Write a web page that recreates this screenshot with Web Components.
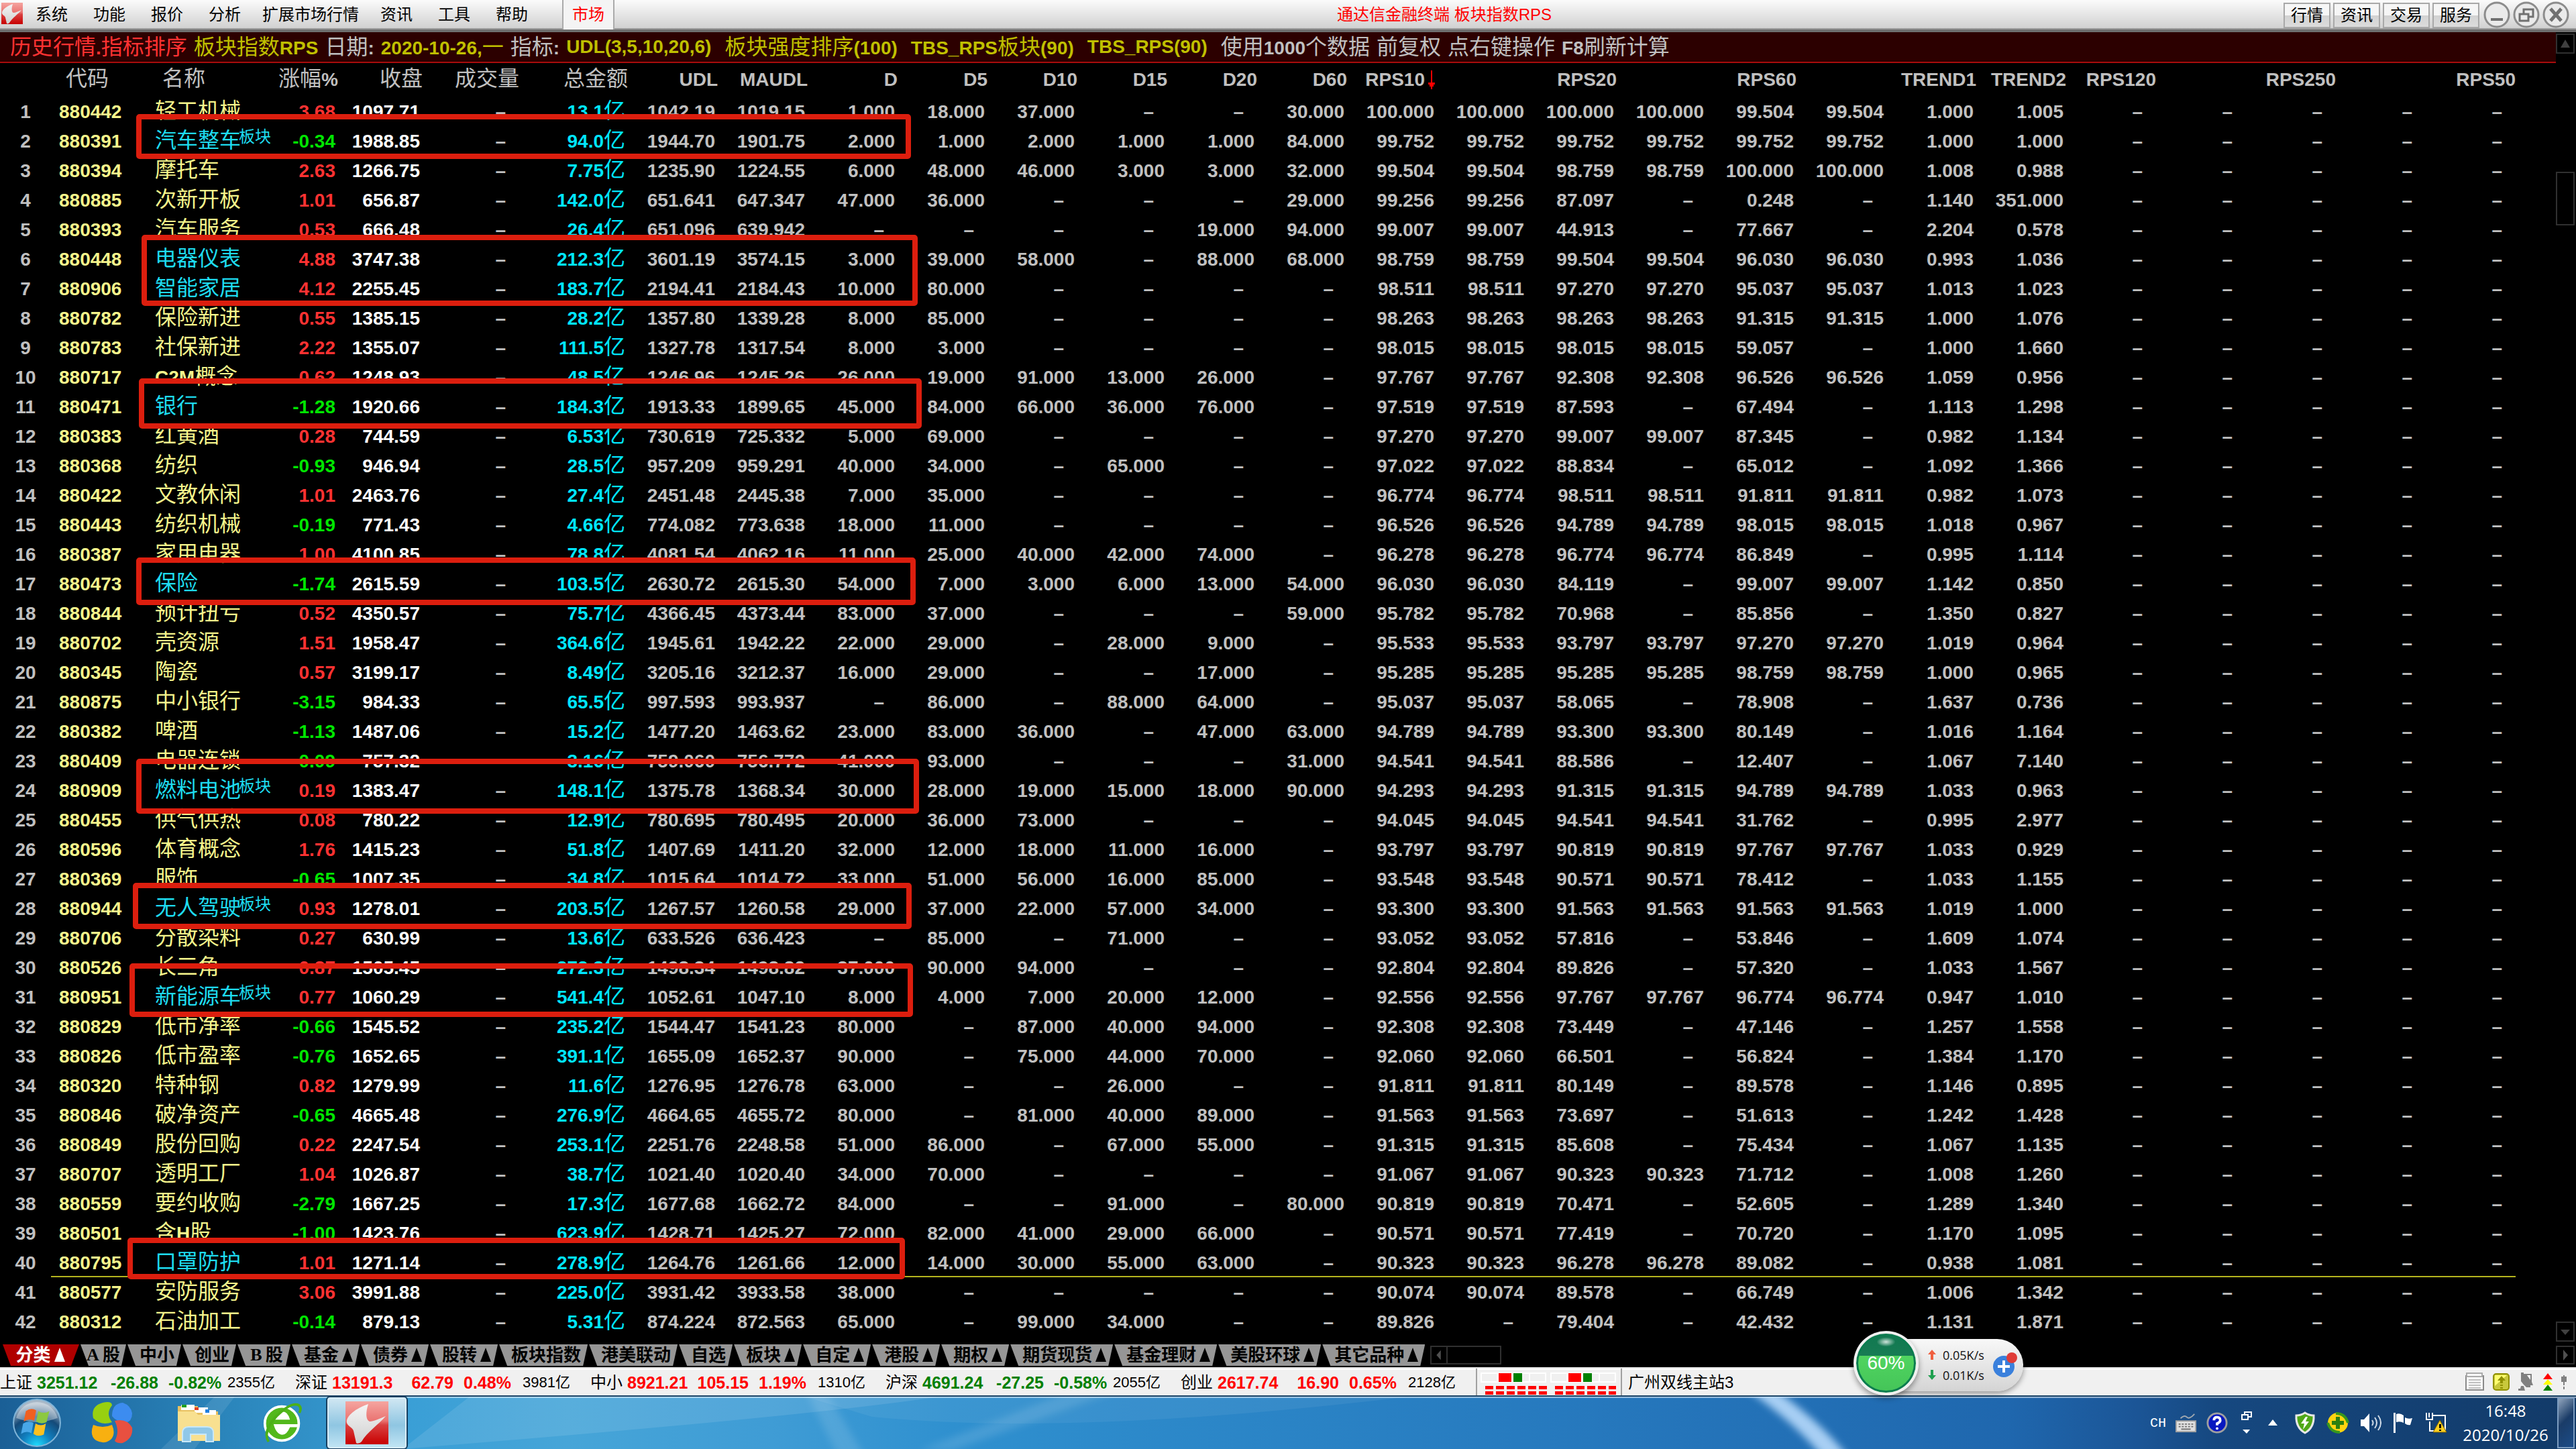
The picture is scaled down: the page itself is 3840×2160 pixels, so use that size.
<!DOCTYPE html>
<html lang="zh-CN">
<head>
<meta charset="utf-8">
<title>通达信金融终端</title>
<style>
html,body{margin:0;height:100%;background:#000;overflow:hidden}
body{font-family:"Liberation Sans","Noto Sans CJK SC",sans-serif}
</style>
</head>
<body>
<trade-terminal></trade-terminal>
<script>
const RESET = `
*{box-sizing:border-box}
button{font:inherit;color:inherit;background:none;border:0;padding:0;margin:0;line-height:inherit;white-space:nowrap}
svg{display:block;flex:none}
`;
const define = (name, html, css) => {
  const t = document.createElement('template');
  t.innerHTML = `<style>${RESET}${css}</style>${html}`;
  customElements.define(name, class extends HTMLElement {
    constructor() {
      super();
      this.attachShadow({ mode: 'open' }).append(t.content.cloneNode(true));
    }
  });
};
// Latin and digits are bold, Chinese runs stay at regular weight
const mix = s => s.replace(/[\u4e00-\u9fff]+/g, m => `<span class="k">${m}</span>`);
const logo = `<svg viewBox="0 0 32 32" preserveAspectRatio="none" width="100%" height="100%"><defs><linearGradient id="r" x1="0" y1="0" x2="0" y2="1"><stop offset="0" stop-color="#f5a5a0"/><stop offset=".45" stop-color="#ea7472"/><stop offset=".55" stop-color="#d94040"/><stop offset="1" stop-color="#c80000"/></linearGradient><linearGradient id="w" x1="0" y1="0" x2="0" y2="1"><stop offset="0" stop-color="#f5f5f5"/><stop offset="1" stop-color="#d0d0d0"/></linearGradient></defs><path fill="url(#r)" d="M0 0h32v32H0z"/><path fill="url(#w)" d="M17 2C8 5 0 11 1 16c1 3 4 3 5 6l2 9c1 1 3 0 4-1 4-7 13-13 18-19-5 2-9 4-12 4-3-1-3-7-1-13z"/></svg>`;

/* ---------- menu bar ---------- */
define('menu-bar', `
<i class="logo">${logo}</i>
<nav>${['系统','功能','报价','分析','扩展市场行情','资讯','工具','帮助'].map(m => `<button>${m}</button>`).join('')}</nav>
<button class="market">市场</button>
<h1>通达信金融终端 板块指数RPS</h1>
<div class="quick">${['行情','资讯','交易','服务'].map(m => `<button>${m}</button>`).join('')}</div>
<div class="win">
<button aria-label="最小化"><svg viewBox="0 0 40 40"><circle cx="20" cy="20" r="18"/><path d="M11 27h18" stroke-width="4"/></svg></button>
<button aria-label="还原"><svg viewBox="0 0 40 40"><circle cx="20" cy="20" r="18"/><path d="M16 18v-6h14v11h-6M10 19h13v10H10z" stroke-width="3"/></svg></button>
<button aria-label="关闭"><svg viewBox="0 0 40 40"><circle cx="20" cy="20" r="18" stroke="#aaa"/><path d="M12 11l16 18M28 11L12 29" stroke-width="5"/></svg></button>
</div>`, `
:host{display:flex;height:48px;flex:none;background:linear-gradient(#fbfbfb,#d0d0d0 43px);border-bottom:4px solid #6e6e6e;box-shadow:inset 0 -2px #9a9a9a;font-size:24px;line-height:44px;color:#000}
.logo{width:32px;height:32px;margin:4px 0 0 2px}
nav{display:flex}
nav button{min-width:86px;padding:0 13px}
.market{width:78px;margin-left:32px;color:#f00;background:#f4f4f4;border-left:2px solid #aaa;border-right:2px solid #aaa}
h1{flex:1;margin:0;padding-right:14px;font:inherit;color:#f00;text-align:center;white-space:nowrap}
.quick{display:flex;gap:4px;padding:4px 6px 0 0;line-height:34px}
.quick button{width:70px;height:38px;border:2px solid #a8a8a8;background:linear-gradient(#f6f6f6 50%,#d2d2d2 50%,#dcdcdc)}
.win{display:flex;gap:4px;padding:2px 10px 0 0}
.win button{width:40px;height:40px}
.win svg{fill:none;stroke:#707070;stroke-width:3}
.win circle{fill:#eaeaea;stroke:#8c8c8c}
`);

/* ---------- indicator strip ---------- */
define('info-strip', `
<span class="r">${mix('历史行情.指标排序')}</span>
<span class="y">${mix('板块指数RPS')}</span>
<span>${mix('日期:')}</span>
<span class="y">${mix('2020-10-26,一')}</span>
<span>${mix('指标:')}</span>
<span class="y g">${mix('UDL(3,5,10,20,6)')}</span>
<span class="y g">${mix('板块强度排序(100)')}</span>
<span class="y g">${mix('TBS_RPS板块(90)')}</span>
<span class="y g">TBS_RPS(90)</span>
<span>${mix('使用1000个数据')}</span>
<span>${mix('前复权')}</span>
<span>${mix('点右键操作')}</span>
<span>${mix('F8刷新计算')}</span>`, `
:host{display:flex;flex:none;gap:10px;height:46px;padding-left:15px;background:#2c0000;border-bottom:2px solid #a80c0c;font-size:28px;line-height:44px;font-weight:700;color:#c0c0c0;white-space:nowrap}
.k{font-size:32px;font-weight:400}
.r{color:#ff3232}.y{color:#c0c000}
.g{padding-right:10px}
`);

/* ---------- quote table ---------- */
const HEAD = ['','代码','名称','涨幅%','收盘','成交量','总金额','UDL','MAUDL','D','D5','D10','D15','D20','D60','RPS10','','RPS20','','RPS60','','TREND1','TREND2','RPS120','','RPS250','','RPS50'];
const DATA = `
880442 轻工机械 3.68 1097.71 13.1亿 1042.19 1019.15 1 18 37 - - 30 100.000 100.000 100.000 100.000 99.504 99.504 1.000 1.005
880391 *汽车整车^ -0.34 1988.85 94.0亿 1944.70 1901.75 2 1 2 1 1 84 99.752 99.752 99.752 99.752 99.752 99.752 1.000 1.000
880394 摩托车 2.63 1266.75 7.75亿 1235.90 1224.55 6 48 46 3 3 32 99.504 99.504 98.759 98.759 100.000 100.000 1.008 0.988
880885 次新开板 1.01 656.87 142.0亿 651.641 647.347 47 36 - - - 29 99.256 99.256 87.097 - 0.248 - 1.140 351.000
880393 汽车服务 0.53 666.48 26.4亿 651.096 639.942 - - - - 19 94 99.007 99.007 44.913 - 77.667 - 2.204 0.578
880448 *电器仪表 4.88 3747.38 212.3亿 3601.19 3574.15 3 39 58 - 88 68 98.759 98.759 99.504 99.504 96.030 96.030 0.993 1.036
880906 *智能家居 4.12 2255.45 183.7亿 2194.41 2184.43 10 80 - - - - 98.511 98.511 97.270 97.270 95.037 95.037 1.013 1.023
880782 保险新进 0.55 1385.15 28.2亿 1357.80 1339.28 8 85 - - - - 98.263 98.263 98.263 98.263 91.315 91.315 1.000 1.076
880783 社保新进 2.22 1355.07 111.5亿 1327.78 1317.54 8 3 - - - - 98.015 98.015 98.015 98.015 59.057 - 1.000 1.660
880717 C2M概念 0.62 1248.93 48.5亿 1246.96 1245.26 26 19 91 13 26 - 97.767 97.767 92.308 92.308 96.526 96.526 1.059 0.956
880471 *银行 -1.28 1920.66 184.3亿 1913.33 1899.65 45 84 66 36 76 - 97.519 97.519 87.593 - 67.494 - 1.113 1.298
880383 红黄酒 0.28 744.59 6.53亿 730.619 725.332 5 69 - - - - 97.270 97.270 99.007 99.007 87.345 - 0.982 1.134
880368 纺织 -0.93 946.94 28.5亿 957.209 959.291 40 34 - 65 - - 97.022 97.022 88.834 - 65.012 - 1.092 1.366
880422 文教休闲 1.01 2463.76 27.4亿 2451.48 2445.38 7 35 - - - - 96.774 96.774 98.511 98.511 91.811 91.811 0.982 1.073
880443 纺织机械 -0.19 771.43 4.66亿 774.082 773.638 18 11 - - - - 96.526 96.526 94.789 94.789 98.015 98.015 1.018 0.967
880387 家用电器 1.00 4100.85 78.8亿 4081.54 4062.16 11 25 40 42 74 - 96.278 96.278 96.774 96.774 86.849 - 0.995 1.114
880473 *保险 -1.74 2615.59 103.5亿 2630.72 2615.30 54 7 3 6 13 54 96.030 96.030 84.119 - 99.007 99.007 1.142 0.850
880844 预计扭亏 0.52 4350.57 75.7亿 4366.45 4373.44 83 37 - - - 59 95.782 95.782 70.968 - 85.856 - 1.350 0.827
880702 壳资源 1.51 1958.47 364.6亿 1945.61 1942.22 22 29 - 28 9 - 95.533 95.533 93.797 93.797 97.270 97.270 1.019 0.964
880345 陶瓷 0.57 3199.17 8.49亿 3205.16 3212.37 16 29 - - 17 - 95.285 95.285 95.285 95.285 98.759 98.759 1.000 0.965
880875 中小银行 -3.15 984.33 65.5亿 997.593 993.937 - 86 - 88 64 - 95.037 95.037 58.065 - 78.908 - 1.637 0.736
880382 啤酒 -1.13 1487.06 15.2亿 1477.20 1463.62 23 83 36 - 47 63 94.789 94.789 93.300 93.300 80.149 - 1.016 1.164
880409 电器连锁 -0.09 757.32 3.16亿 759.060 756.772 41 93 - - - 31 94.541 94.541 88.586 - 12.407 - 1.067 7.140
880909 *燃料电池^ 0.19 1383.47 148.1亿 1375.78 1368.34 30 28 19 15 18 90 94.293 94.293 91.315 91.315 94.789 94.789 1.033 0.963
880455 供气供热 0.08 780.22 12.9亿 780.695 780.495 20 36 73 - - - 94.045 94.045 94.541 94.541 31.762 - 0.995 2.977
880596 体育概念 1.76 1415.23 51.8亿 1407.69 1411.20 32 12 18 11 16 - 93.797 93.797 90.819 90.819 97.767 97.767 1.033 0.929
880369 服饰 -0.65 1007.35 34.8亿 1015.64 1014.72 33 51 56 16 85 - 93.548 93.548 90.571 90.571 78.412 - 1.033 1.155
880944 *无人驾驶^ 0.93 1278.01 203.5亿 1267.57 1260.58 29 37 22 57 34 - 93.300 93.300 91.563 91.563 91.563 91.563 1.019 1.000
880706 分散染料 0.27 630.99 13.6亿 633.526 636.423 - 85 - 71 - - 93.052 93.052 57.816 - 53.846 - 1.609 1.074
880526 长三角 0.87 1505.45 272.3亿 1498.34 1498.82 37 90 94 - - - 92.804 92.804 89.826 - 57.320 - 1.033 1.567
880951 *新能源车^ 0.77 1060.29 541.4亿 1052.61 1047.10 8 4 7 20 12 - 92.556 92.556 97.767 97.767 96.774 96.774 0.947 1.010
880829 低市净率 -0.66 1545.52 235.2亿 1544.47 1541.23 80 - 87 40 94 - 92.308 92.308 73.449 - 47.146 - 1.257 1.558
880826 低市盈率 -0.76 1652.65 391.1亿 1655.09 1652.37 90 - 75 44 70 - 92.060 92.060 66.501 - 56.824 - 1.384 1.170
880320 特种钢 0.82 1279.99 11.6亿 1276.95 1276.78 63 - - 26 - - 91.811 91.811 80.149 - 89.578 - 1.146 0.895
880846 破净资产 -0.65 4665.48 276.9亿 4664.65 4655.72 80 - 81 40 89 - 91.563 91.563 73.697 - 51.613 - 1.242 1.428
880849 股份回购 0.22 2247.54 253.1亿 2251.76 2248.58 51 86 - 67 55 - 91.315 91.315 85.608 - 75.434 - 1.067 1.135
880707 透明工厂 1.04 1026.87 38.7亿 1021.40 1020.40 34 70 - - - - 91.067 91.067 90.323 90.323 71.712 - 1.008 1.260
880559 要约收购 -2.79 1667.25 17.3亿 1677.68 1662.72 84 - - 91 - 80 90.819 90.819 70.471 - 52.605 - 1.289 1.340
880501 含H股 -1.00 1423.76 623.9亿 1428.71 1425.27 72 82 41 29 66 - 90.571 90.571 77.419 - 70.720 - 1.170 1.095
880795 *口罩防护 1.01 1271.14 278.9亿 1264.76 1261.66 12 14 30 55 63 - 90.323 90.323 96.278 96.278 89.082 - 0.938 1.081
880577 安防服务 3.06 3991.88 225.0亿 3931.42 3933.58 38 - - - - - 90.074 90.074 89.578 - 66.749 - 1.006 1.342
880312 石油加工 -0.14 879.13 5.31亿 874.224 872.563 65 - 99 34 - - 89.826 - 79.404 - 42.432 - 1.131 1.871`.trim().split('\n').map(l => l.split(' '));
const num = v => v === '-' ? '<td class="n">–</td>' : `<td>${v}</td>`;
const row = (r, i) => {
  const [code, name, pct, close, amt, udl, mau, ...rest] = r;
  const hot = name[0] === '*';
  const label = mix(name.replace(/[*^]/g, '')) + (name.endsWith('^') ? '<span class="sup">板块</span>' : '');
  const days = rest.slice(0, 6).map(v => num(v === '-' ? v : v + '.000')).join('');
  return `<tr${i === 39 ? ' class="cur"' : ''}><td class="i">${i + 1}</td><td class="c">${code}</td><td class="m${hot ? ' hot' : ''}">${label}</td><td class="${pct[0] === '-' ? 'dn' : 'up'}">${pct}</td><td class="w">${close}</td><td class="n">–</td><td class="a">${mix(amt)}</td>${num(udl)}${num(mau)}${days}${rest.slice(6).map(num).join('')}${'<td class="n">–</td>'.repeat(5)}</tr>`;
};
const WIDTHS = [76, 134, 200, 94, 126, 144, 162].concat(Array(21).fill(134));
const arrow = '<svg width="16" height="28" viewBox="0 0 16 28"><path fill="red" d="M7 0h2v18h4v3h-2v3H9v4H7v-4H5v-3H3v-3h4z"/></svg>';
// top, height, left and width of each highlight frame drawn over the rows
const MARKS = [[170,67,203,1155],[350,106,211,1157],[564,75,207,1167],[831,71,203,1162],[1131,82,203,1167],[1316,69,198,1161],[1436,80,193,1168],[1845,62,190,1159]];
define('quote-table', `
<table>
<colgroup>${WIDTHS.map(w => `<col style="width:${w}px">`).join('')}</colgroup>
<thead><tr>${HEAD.map((h, i) => `<th${i === 1 ? ' class="hc"' : i === 2 ? ' class="hn"' : ''}>${i === 15 ? `<span class="sort">${h}${arrow}</span>` : mix(h)}</th>`).join('')}</tr></thead>
<tbody>${DATA.map(row).join('')}</tbody>
</table>
${MARKS.map(([t, h, l, w]) => `<i class="mark" style="top:${t - 94}px;left:${l}px;width:${w}px;height:${h}px"></i>`).join('')}`, `
:host{display:block;position:relative;flex:1;min-height:0;overflow:hidden;color:#c0c0c0;font-size:28px;font-weight:700}
table{table-layout:fixed;border-collapse:collapse;width:3750px;white-space:nowrap}
th,td{padding:0;text-align:right;overflow:visible}
th{height:50px;line-height:50px}
td{height:44px;padding:2px 4px 0 0;line-height:42px}
.k{font-size:32px;font-weight:400;line-height:1px}
th.hc{text-align:left;padding-left:22px}
th.hn{text-align:left;padding-left:32px}
.sort{display:inline-flex;align-items:center;gap:2px;vertical-align:top}
.i{text-align:center;padding-right:0}
.c{text-align:left;padding-left:12px;color:#f5f58c}
.m{text-align:left;padding-left:21px;color:#f5f58c}
.m.hot{color:#1edcf0}
.sup{font-size:24px;font-weight:400;line-height:1px;vertical-align:8px;margin-left:-3px}
.up{color:#ff3232}.dn{color:#00e600}.w{color:#fff}.a{color:#00e6ff}
td.n{padding-right:20px;color:#c0c0c0}
.cur td:not(.i){box-shadow:inset 0 -2px #b4b41e}
.mark{position:absolute;border:8px solid #dc1e0e;border-radius:5px}
`);

/* ---------- scroll bar ---------- */
define('scroll-rail', `
<button aria-label="上"><svg width="28" height="30" viewBox="0 0 28 30"><path d="M14 9l7 12H7z"/></svg></button>
<i></i>
<button aria-label="下"><svg width="28" height="30" viewBox="0 0 28 30"><path d="M14 20l7-8H7z"/></svg></button>`, `
:host{display:flex;flex-direction:column;flex:none;width:30px;padding:2px 2px 4px 0;align-items:stretch}
button{height:30px;border:2px solid #303030}
svg{margin:-2px;fill:#404040}
i{height:80px;margin:176px 0 auto;border:2px solid #303030}
`);

/* ---------- board tabs ---------- */
const TABS = ['分类▲','A 股','中小','创业','B 股','基金▲','债券▲','股转▲','板块指数','港美联动','自选','板块▲','自定▲','港股▲','期权▲','期货现货▲','基金理财▲','美股环球▲','其它品种▲'];
const up = '<svg width="16" height="22" viewBox="0 0 16 22"><path fill="currentColor" d="M8 0l8 21H0z"/></svg>';
define('board-tabs', `
${TABS.map((t, i) => `<button${i === 0 ? ' class="on"' : i === 1 ? ' class="a"' : ''}>${t.replace('▲', '').replace(/^([AB]) /, '<b>$1</b>')}${t.endsWith('▲') ? up : ''}</button>`).join('')}
<span class="track"><svg width="24" height="24" viewBox="0 0 24 24"><path fill="#505050" d="M15 4v16l-7-8z"/></svg></span>
<span class="end"><svg width="24" height="24" viewBox="0 0 24 24"><path fill="#505050" d="M9 4v16l7-8z"/></svg></span>`, `
:host{display:flex;flex:none;height:34px;padding-left:4px;gap:2px;background:#000;font-size:26px;font-weight:700;line-height:32px}
button{display:flex;flex:none;align-items:center;justify-content:center;gap:5px;height:32px;min-width:79px;padding:0 10px 0 18px;background:#969696;color:#000;clip-path:polygon(0 0,100% 0,calc(100% - 7px) 100%,12px 100%)}
.on{background:#b00000;color:#fff;width:114px;padding:0 20px 0 18px;clip-path:polygon(0 0,100% 0,calc(100% - 12px) 100%,12px 100%)}
.a{min-width:68px;padding:0 8px}
b{font-family:"Liberation Serif",serif}
.track{width:106px;height:28px;margin:2px auto 0 6px;border:2px solid #303030}
.track svg{border-right:2px solid #303030}
.end{width:28px;height:28px;margin:2px 2px 0 0;border:2px solid #303030}
`);

/* ---------- index ticker ---------- */
const IDX = [['上证','3251.12','-26.88','-0.82%','2355亿'],['深证','13191.3','62.79','0.48%','3981亿'],['中小','8921.21','105.15','1.19%','1310亿'],['沪深','4691.24','-27.25','-0.58%','2055亿'],['创业','2617.74','16.90','0.65%','2128亿']];
const meter = x => {
  let s = `<path fill="#fff" d="M${x} 0h98v15H${x}z"/><path fill="#f0f0f0" d="M${x + 2} 2h22v11h-22zM${x + 52} 2h20v11h-20zM${x + 74} 2h22v11h-22z"/><path fill="#f00" d="M${x + 27} 1h19v13h-19z"/><path fill="#008000" d="M${x + 49} 1h13v13h-13z"/><path fill="#f00" d="`;
  for (let r = 0; r < 2; r++) for (let c = 0; c < 6; c++) s += `M${x + 7 + c * 16} ${20 + r * 8}h12v5h-12z`;
  return s + '"/>';
};
define('index-ticker', `
${IDX.map(([n, p, c, q, v]) => `<div class="q ${c[0] === '-' ? 'g' : 'r'}"><span>${n}</span><b>${p}</b><b class="e">${c}</b><b class="p">${q}</b><span class="v">${v}</span></div>`).join('')}
<div class="meters"><svg width="202" height="34" viewBox="0 0 202 34">${meter(0)}${meter(104)}</svg></div>
<span class="host">广州双线主站3</span>
<div class="icons">
<svg width="30" height="28" viewBox="0 0 30 28"><path fill="#f8f8f8" stroke="#8a8a8a" stroke-width="2" d="M2 5h26v21H2z"/><path fill="#f8f8f8" stroke="#aaa" stroke-width="2" d="M3 1h23v5H3z"/><path stroke="#c0c0c0" stroke-width="2" d="M6 11h18M6 15h18M6 19h18M6 23h18"/></svg>
<svg width="26" height="28" viewBox="0 0 26 28"><rect x="1" y="2" width="23" height="24" rx="4" fill="#c8c83c" stroke="#909000" stroke-width="2"/><path fill="#ffff70" d="M3 4h18L3 20z"/><path fill="#909000" d="M13 5l6 7h-4v4h-4v-4H7zM11 18h4v2h-4zM11 22h4v2h-4z"/></svg>
<svg width="24" height="28" viewBox="0 0 24 28"><path fill="#808080" d="M4 0h4v2h12v12l2 5h-4v3h-6L8 18l-4-5zM4 20h4l2 7H0v-3h3z"/><path fill="#fff" d="M13 4h5v7z"/></svg>
<svg width="16" height="28" viewBox="0 0 16 28"><path fill="red" d="M8 1l7 9H1z"/><path fill="#ff0" d="M8 10l7 8H1z"/><path fill="green" d="M8 18l7 9H1z"/></svg>
<svg width="8" height="28" viewBox="0 0 8 28"><path fill="#808080" d="M3 4h2v2h3v8H5v5H3v-5H0V6h3zM3 21h2v4H3z"/></svg>
</div>`, `
:host{display:flex;flex:none;height:42px;background:#f0f0f0;border-top:2px solid #e3e3e3;box-shadow:inset 0 2px #fff;font-size:24px;line-height:42px;color:#000;white-space:nowrap}
.q{display:grid;grid-template-columns:55px 92px 89px 103px 101px}
.q b{font-size:25px}
.e{text-align:right}
.p{padding-left:15px}
.v{font-size:22px}
.g b{color:#008000}.r b{color:#f00}
.meters{border-left:2px solid #a0a0a0;border-right:2px solid #a0a0a0;padding:6px 5px 0 5px;margin-right:9px;width:218px}
.icons{display:flex;gap:12px;margin-left:auto;padding:6px 14px 0 0}
`);

/* ---------- task bar ---------- */
define('task-bar', `
<svg class="bg" preserveAspectRatio="none" viewBox="0 0 3840 78"><defs><filter id="f" x="-20%" y="-20%" width="140%" height="140%"><feGaussianBlur stdDeviation="6"/></filter></defs>
<path fill="#fff" opacity=".1" d="M600 78L700 0h700q-200 30-800 78zM240 78L320 0h30l-60 78z"/>
<path fill="#fff" opacity=".12" filter="url(#f)" d="M1200 -10h30l60 100h-40zM1370 80l230-90h70l-250 90z"/>
<path fill="#fff" opacity=".06" d="M1300 30q300 30 800-30h-900z"/>
<path fill="#bfe0ff" opacity=".85" filter="url(#f)" d="M2605 -10h42q70 50 108 100h-38q-40-50-112-100z"/></svg>
<div class="apps">
<button aria-label="开始"><svg width="76" height="76" viewBox="0 0 74 74"><defs><radialGradient id="o" cx=".5" cy="1" r=".9"><stop offset="0" stop-color="#20e0ff"/><stop offset=".35" stop-color="#1080c0"/><stop offset=".7" stop-color="#154a78"/><stop offset="1" stop-color="#a8b8c8"/></radialGradient></defs><circle cx="37" cy="37" r="34" fill="url(#o)" stroke="#7fb4d8" stroke-width="2"/><path fill="#fff" opacity=".35" d="M7 30a31 31 0 0160 0q-30 12-60 0z"/><path fill="#f06020" d="M21 20q8-6 15-1l-3 15q-7-4-15 1z"/><path fill="#8cc840" d="M39 20q8 5 16 0l-4 16q-8 4-15-1z"/><path fill="#48a8e8" d="M17 38q8-5 15-1l-3 15q-7-4-15 1z"/><path fill="#fcc020" d="M35 38q8 5 15 0l-3 16q-8 4-15-1z"/></svg></button>
<button aria-label="应用"><svg width="64" height="62" viewBox="0 0 64 62"><path fill="#98d010" d="M18 1q14-3 14 4-10 12 0 25-16 6-28-6Q0 6 18 1z"/><path fill="#3c8cf0" d="M48 1q12 4 14 16 0 12-10 14-14-2-20-10Q32 2 48 1z"/><path fill="#f8b010" d="M4 34q14 6 28 0 6 14-2 22-10 8-22 1Q-2 50 4 34z"/><path fill="#e85040" d="M36 28q18-4 26 10 2 16-14 23-8 1-12-3 8-14 0-30z"/></svg></button>
<button aria-label="资源管理器"><svg width="66" height="58" viewBox="0 0 66 58"><path fill="#e8c060" d="M1 4h30v8h30v44H1z"/><path fill="#fff" d="M6 2h20v8H6zM26 6h20v8H26zM38 10h20v8H38z"/><path fill="#20a020" d="M7 2h7v4H7z"/><path fill="#e04020" d="M26 6h6v4h-6z"/><path fill="#2080e0" d="M42 9h6v5h-6z"/><path fill="#f8e090" d="M1 12h26l4 5h33v39H1z"/><path fill="#90c8e8" stroke="#c8e8f8" stroke-width="2" d="M8 57V44q0-9 9-9h28q9 0 9 9v13H43V46H20v11z"/></svg></button>
<button aria-label="浏览器"><svg width="60" height="62" viewBox="0 0 64 64"><circle cx="31" cy="33" r="27" fill="#52b81c" stroke="#fff" stroke-width="4"/><path fill="#fff" d="M20 27q3-13 12-13t12 13z"/><path fill="#fff" d="M18 34h40v5H44q-5 12-12 12-10-1-14-17z"/><path fill="none" stroke="#4cb018" stroke-width="4" d="M10 62Q0 46 22 22 46-2 58 4q5 4 1 12"/></svg></button>
<button class="active" aria-label="通达信"><i>${logo}</i></button>
</div>
<div class="lang">
<span class="ch">CH</span>
<svg width="32" height="32" viewBox="0 0 34 32"><path fill="none" stroke="#a0a8b0" stroke-width="2" d="M8 9q6-6 10-2t12-5"/><rect x="1" y="13" width="31" height="17" fill="#e0e0e0" stroke="#a0a0a0" stroke-width="2"/><path stroke="#707070" stroke-width="2" stroke-dasharray="3 2" d="M5 18h24M5 22h24"/><path stroke="#707070" stroke-width="2" d="M9 26h15"/></svg>
<svg width="32" height="32" viewBox="0 0 34 34"><circle cx="17" cy="17" r="15" fill="#0818c0" stroke="#a0a0a0" stroke-width="3"/><path fill="none" stroke="#fff" stroke-width="4" d="M12 13q0-5 5-5t5 5q0 3-5 5v3"/><circle cx="17" cy="26" r="2" fill="#fff"/></svg>
</div>
<div class="sys">
<svg width="18" height="36" viewBox="0 0 18 36"><path fill="none" stroke="#fff" stroke-width="2" d="M6 6V2h10v7h-4M2 6h9v7H2z"/><path fill="#fff" d="M3 28h11l-5 6z"/></svg>
<svg width="16" height="12" viewBox="0 0 16 12"><path fill="#fff" d="M8 1l7 9H1z"/></svg>
</div>
<div class="tray">
<svg width="32" height="34" viewBox="0 0 32 34"><path fill="#50a818" stroke="#e8e8e8" stroke-width="3" d="M16 2q6 4 13 4 1 18-13 26Q2 24 3 6q7 0 13-4z"/><path fill="#fff" d="M17 8l-7 10h5l-2 9 9-12h-5l3-7z"/></svg>
<svg width="34" height="34" viewBox="0 0 34 34"><circle cx="17" cy="17" r="15" fill="#ffd410"/><path fill="none" stroke="#38981c" stroke-width="4" d="M14 3q14 0 18 14M20 31Q6 31 2 17"/><path fill="#2c8010" d="M14 8h6v6h6v6h-6v6h-6v-6H8v-6h6z"/></svg>
<svg width="32" height="30" viewBox="0 0 32 30"><path fill="#fff" d="M1 10h5l8-9v28l-8-9H1z"/><path fill="none" stroke="#d0dce8" stroke-width="2" d="M18 11q3 4 0 8M22 7q6 8 0 16M27 4q8 11 0 22"/></svg>
<svg width="32" height="32" viewBox="0 0 32 32"><path fill="#fff" d="M2 1h3v30H2zM6 3q6-2 11 2v11q-5-3-11-1zM19 8q5 3 11 1l-3 10q-4 1-8-2z"/></svg>
<svg width="34" height="32" viewBox="0 0 34 32"><path fill="none" stroke="#fff" stroke-width="2" d="M12 5h19v22M8 14v14h10"/><path fill="none" stroke="#fff" stroke-width="2" d="M3 1v10h9V1M7 1v7"/><path fill="#fcd020" stroke="#806000" d="M23 12l10 18H13z"/><path fill="#000" d="M22 18h3v6h-3zM22 26h3v2h-3z"/></svg>
</div>
<time><span>16:48</span><span>2020/10/26</span></time>
<button class="desk" aria-label="显示桌面"></button>`, `
:host{display:flex;position:relative;flex:none;height:80px;border-top:2px solid #1e4668;align-items:center;color:#fff;
background:linear-gradient(90deg,#1a5f96,#2b86bc 9%,#3a9fd6 16%,#46a5d8 22%,#3f9cd5 30%,#2f90cf 37%,#2678bd 62%,#1f67ae 78%,#1b5596 83%,#164880 86%,#123a68)}
.bg{position:absolute;inset:0;width:100%;height:100%;box-shadow:inset 0 2px rgba(255,255,255,.5)}
button,div,time{position:relative}
.apps{display:grid;grid-template-columns:110px 114px 146px 102px 16px 118px;grid-auto-rows:76px}
.apps button{display:flex;align-items:center;justify-content:center}
.apps .active{grid-column:6;border:2px solid #d8ecf8;border-radius:4px;outline:2px solid #184060;background:linear-gradient(#cfe6f2,#8fc6e2 55%,#c0e4f4)}
.active i{width:64px;height:64px}
.lang,.sys,.tray{display:flex;align-items:center}
.lang{gap:14px;margin-left:auto}
.sys{gap:22px;margin:0 24px 0 19px}
.tray{gap:16px}
.ch{font:20px "Liberation Mono",monospace}
time{display:flex;flex-direction:column;align-items:center;font-family:"Open Sans",sans-serif;font-size:24px;line-height:36px;width:134px;margin:0 10px 0 20px}
.desk{width:26px;height:76px;margin-right:2px;border:2px solid #7c9cc0;background:linear-gradient(135deg,#90a4bc,#1a3c68 45%,#1c4c88)}
`);

/* ---------- floating speed widget ---------- */
define('speed-widget', `
<div class="pill"><div class="rates"><span><svg width="12" height="16" viewBox="0 0 12 16"><path fill="#f06040" d="M6 0l6 7H8v8H4V7H0z"/></svg>0.05K/s</span><span><svg width="12" height="16" viewBox="0 0 12 16"><path fill="#20a050" d="M6 15l6-7H8V0H4v8H0z"/></svg>0.01K/s</span></div>
<svg width="38" height="38" viewBox="0 0 38 38"><circle cx="18" cy="21" r="16" fill="#3a80dc"/><path stroke="#fff" stroke-width="4" d="M9 21h18M18 12v18"/><circle cx="30" cy="8" r="8" fill="#e03c38"/></svg></div>
<div class="ball">60%</div>`, `
:host{display:block;position:absolute;right:824px;bottom:80px;width:253px;height:96px}
.pill{display:flex;align-items:center;justify-content:space-between;margin:12px 0 0 60px;height:78px;padding:0 9px 0 51px;border-radius:0 39px 39px 0;background:linear-gradient(#f8f8f8,#d4d4d4);box-shadow:0 3px 8px #0006;color:#111}
.rates{display:flex;flex-direction:column;font-family:"Open Sans",sans-serif;font-size:18px;line-height:30px}
.rates span{display:flex;align-items:center;gap:10px}
.ball{position:absolute;left:0;top:0;width:97px;height:96px;border-radius:50%;border:4px solid #f0f0f0;box-shadow:inset 0 0 0 3px #0c7c50,0 4px 8px #0006;background:radial-gradient(ellipse 14px 7px at 50% 14%,#fffc,#fff0),linear-gradient(#107850,#187c54 38%,#50d460 38%,#44c458);color:#fff;font-size:28px;line-height:88px;text-align:center}
`);

define('trade-terminal', `
<menu-bar></menu-bar>
<main><section><info-strip></info-strip><quote-table></quote-table></section><scroll-rail></scroll-rail></main>
<board-tabs></board-tabs>
<index-ticker></index-ticker>
<task-bar></task-bar>
<speed-widget></speed-widget>`, `
:host{display:flex;flex-direction:column;position:relative;height:100vh;background:#000}
main{display:flex;flex:1;min-height:0}
section{display:flex;flex-direction:column;flex:1;min-width:0}
`);
</script>
</body>
</html>
